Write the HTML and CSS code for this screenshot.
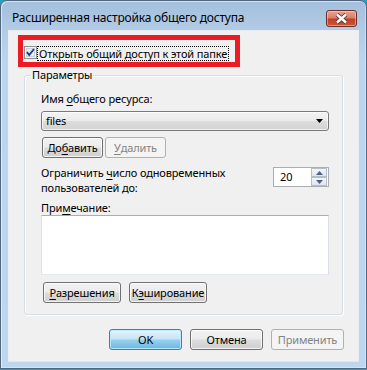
FILE: index.html
```html
<!DOCTYPE html>
<html lang="ru">
<head>
<meta charset="utf-8">
<link rel="stylesheet" href="styles.css">
</head>
<body>
<div class="window">
  <div class="titlebar">
    <span class="title">Расширенная настройка общего доступа</span>
    <span class="close">
      <svg width="13" height="11" viewBox="0 0 13 11">
        <path d="M2 1.5 L11 9.5 M11 1.5 L2 9.5" stroke="#4a3a3a" stroke-width="4.2" stroke-linecap="butt" fill="none"/>
        <path d="M2 1.5 L11 9.5 M11 1.5 L2 9.5" stroke="#ffffff" stroke-width="2.4" stroke-linecap="butt" fill="none"/>
      </svg>
    </span>
  </div>
  <div class="client">
    <div class="highlight">
      <div class="share">
        <span class="checkbox">
          <svg width="13" height="13" viewBox="0 0 13 13">
            <rect x="0.5" y="0.5" width="12" height="12" fill="#f4f4f4" stroke="#8e8f8f"/>
            <rect x="2.5" y="2.5" width="8" height="8" fill="#e8ecf1" stroke="#c9d1da"/>
            <path d="M3 6.2 L5.2 9 L10 3" stroke="#1e3d85" stroke-width="1.9" fill="none"/>
          </svg>
        </span>
        <span class="focus">Открыть общий доступ к этой папке</span>
      </div>
    </div>
    <div class="group">
      <span class="group-title">Параметры</span>
      <div class="label">Имя <u>о</u>бщего ресурса:</div>
      <div class="combo">
        <span>files</span>
        <svg width="8" height="4" viewBox="0 0 8 4"><path d="M0 0 H7 L3.5 4 Z" fill="#000"/></svg>
      </div>
      <div class="row row-add">
        <span class="btn btn-small">До<u>б</u>авить</span>
        <span class="btn btn-small disabled"><u>У</u>далить</span>
      </div>
      <div class="limit">
        <div class="limit-text">Ограничить <u>ч</u>исло одновременных<br>пользователей до:</div>
        <div class="spin">
          <span class="spin-value">20</span>
          <span class="spin-buttons">
            <span class="spin-btn"><svg width="7" height="4" viewBox="0 0 7 4"><path d="M0 4 H7 L3.5 0 Z" fill="#4d6185"/></svg></span>
            <span class="spin-btn"><svg width="7" height="4" viewBox="0 0 7 4"><path d="M0 0 H7 L3.5 4 Z" fill="#4d6185"/></svg></span>
          </span>
        </div>
      </div>
      <div class="label label-note">При<u>м</u>ечание:</div>
      <div class="memo"></div>
      <div class="row row-perm">
        <span class="btn btn-mid"><u>Р</u>азрешения</span>
        <span class="btn btn-mid">К<u>э</u>ширование</span>
      </div>
    </div>
    <div class="footer">
      <span class="btn btn-big default">OK</span>
      <span class="btn btn-big">Отмена</span>
      <span class="btn btn-big disabled">Применить</span>
    </div>
  </div>
</div>
</body>
</html>
```
FILE: styles.css
```css
* { box-sizing: border-box; }
html, body { margin: 0; padding: 0; }
body {
  width: 367px;
  height: 370px;
  background: #2a9fc0;
  font-family: "Noto Sans", "Open Sans", sans-serif;
  font-size: 11px;
  letter-spacing: -0.15px;
  color: #000;
  overflow: hidden;
}
u { text-decoration: underline; text-underline-offset: 2px; text-decoration-thickness: 1px; }

.window {
  width: 367px;
  height: 369px;
  border: 1px solid #52667d;
  border-radius: 7px 7px 0 0;
  background: linear-gradient(180deg, #a4bfdc 0px, #b3cce6 30px, #bcd5ee 60px, #bed6ee 100%);
  display: flex;
  flex-direction: column;
  box-shadow: inset 1px 1px 0 rgba(255,255,255,0.55), inset -1px -1px 0 rgba(255,255,255,0.35);
}

.titlebar {
  height: 29px;
  display: flex;
  align-items: flex-start;
  justify-content: space-between;
  padding: 0 9px 0 11px;
}
.title {
  margin-top: 9px;
  font-size: 12px;
  line-height: 16px;
  letter-spacing: -0.2px;
}
.close {
  margin-top: 9px;
  width: 31px;
  height: 17px;
  border: 1px solid #6b2f2a;
  border-radius: 3px;
  background: linear-gradient(180deg, #e8a392 0%, #dc7f68 45%, #c23f22 55%, #cb563a 100%);
  box-shadow: inset 0 0 0 1px rgba(255,230,220,0.45);
  display: flex;
  align-items: center;
  justify-content: center;
}

.client {
  margin: 0 7px 0 7px;
  height: 332px;
  background: #f0f0f0;
  border: 1px solid #e8edf3;
  border-bottom-color: #dde6ef;
}

.highlight {
  margin: 4px 0 0 9px;
  width: 222px;
  height: 32px;
  border: 5px solid #ed1c24;
  padding: 6px 0 0 1px;
}
.share {
  display: flex;
  align-items: flex-start;
}
.checkbox { width: 13px; height: 13px; display: block; }
.checkbox svg { display: block; }
.focus {
  margin-left: 0;
  margin-top: 0;
  padding: 0 1px;
  line-height: 13px;
  border: 1px dotted #000;
  white-space: nowrap;
}

.group {
  position: relative;
  margin: 8px 0 0 15px;
  width: 319px;
  height: 240px;
  border: 1px solid #d5dfe5;
  border-radius: 3px;
  box-shadow: inset 1px 1px 0 #fff, 1px 1px 0 #fff;
  padding: 15px 13px 0 16px;
}
.group-title {
  position: absolute;
  top: -9px;
  left: 6px;
  padding: 0 1px;
  line-height: 16px;
  background: #f0f0f0;
}

.label {
  line-height: 15px;
  height: 15px;
}

.combo {
  margin-top: 5px;
  height: 20px;
  border: 1px solid #7a7a7a;
  border-radius: 3px;
  background: linear-gradient(180deg, #f3f3f3 0%, #ebebeb 48%, #dddddd 52%, #d2d2d2 100%);
  box-shadow: inset 0 0 0 1px rgba(255,255,255,0.7);
  display: flex;
  align-items: center;
  justify-content: space-between;
  padding: 0 4px 0 4px;
  line-height: 16px;
}

.row { display: flex; }
.row-add { margin-top: 6px; margin-left: 1px; gap: 2px; }
.row-perm { margin-top: 7px; margin-left: 2px; gap: 8px; }

.btn {
  height: 21px;
  border: 1px solid #707070;
  border-radius: 3px;
  background: linear-gradient(180deg, #f2f2f2 0%, #ebebeb 48%, #dddddd 52%, #cfcfcf 100%);
  box-shadow: inset 0 0 0 1px rgba(255,255,255,0.75);
  display: flex;
  align-items: center;
  justify-content: center;
  line-height: 16px;
  white-space: nowrap;
}
.btn-small { width: 61px; }
.btn-mid { width: 78px; }
.btn-big { width: 73px; }
.btn.disabled {
  border-color: #adb2b5;
  background: #f4f4f4;
  box-shadow: none;
  color: #838383;
}
.btn.default {
  border-color: #3c7fb1;
  background: linear-gradient(180deg, #e5f4fc 0%, #c4e5f6 48%, #98d1ef 52%, #6ab5e0 100%);
  box-shadow: inset 0 0 0 1px rgba(190,235,255,0.9);
}

.limit {
  margin-top: 7px;
  display: flex;
  justify-content: space-between;
  align-items: flex-start;
}
.limit-text {
  line-height: 15px;
}
.spin {
  margin-top: 2px;
  width: 56px;
  height: 20px;
  border: 1px solid #abadb3;
  background: #fff;
  display: flex;
  justify-content: space-between;
  align-items: center;
  padding: 0 1px 0 6px;
}
.spin-value { line-height: 16px; }
.spin-buttons {
  display: flex;
  flex-direction: column;
  height: 18px;
}
.spin-btn {
  width: 16px;
  height: 9px;
  border: 1px solid #b6bdc8;
  background: linear-gradient(180deg, #f4f6f8, #e2e6eb);
  display: flex;
  align-items: center;
  justify-content: center;
}

.label-note { margin-top: 6px; height: 14px; line-height: 14px; }

.memo {
  height: 60px;
  border: 1px solid #abadb3;
  border-color: #abadb3 #dbdfe6 #e3e9ef #e2e3ea;
  background: #fff;
}

.footer {
  display: flex;
  justify-content: flex-end;
  gap: 8px;
  margin-top: 14px;
  padding-right: 14px;
}
```
